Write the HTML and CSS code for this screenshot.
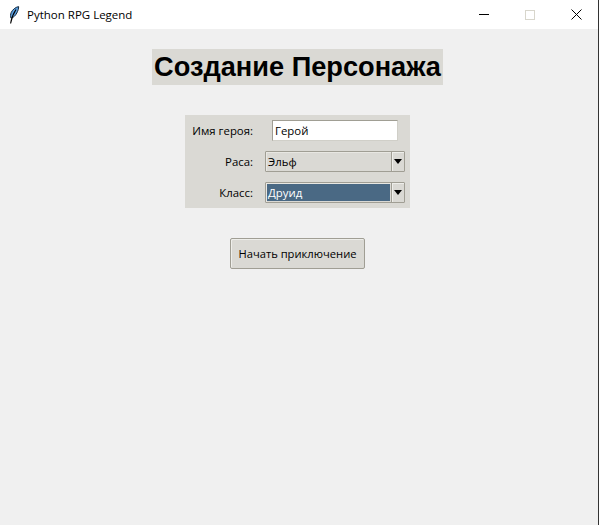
FILE: index.html
```html
<!DOCTYPE html>
<html lang="ru">
<head>
<meta charset="utf-8">
<title>Python RPG Legend</title>
<link rel="stylesheet" href="styles.css">
</head>
<body>
<div class="window">
  <header class="titlebar">
    <svg class="feather" width="12" height="18" viewBox="0 0 12 18">
      <path d="M10.6 .6 C7.5 1.2 4.5 3.6 3.2 6.5 C2.4 8.4 2.4 10.6 3 12.2 C5.4 11.6 7.5 9.6 8.8 7 C10 4.8 10.8 2.4 10.6 .6 Z" fill="#5a9fe0" stroke="#14283c" stroke-width="1"/>
      <path d="M8 3.5 C6 6.5 3.6 11 2.6 17.5" stroke="#000" stroke-width="1.1" fill="none"/>
    </svg>
    <span class="title-text">Python RPG Legend</span>
    <div class="controls">
      <span class="ctl"><svg width="10" height="10" viewBox="0 0 10 10"><path d="M0 4.5H10" stroke="#000" fill="none"/></svg></span>
      <span class="ctl"><svg width="10" height="10" viewBox="0 0 10 10"><rect x=".5" y=".5" width="9" height="9" stroke="#d8d6cc" fill="none"/></svg></span>
      <span class="ctl"><svg width="11" height="11" viewBox="0 0 11 11"><path d="M.5 .5L10.5 10.5M10.5 .5L.5 10.5" stroke="#000" fill="none"/></svg></span>
    </div>
  </header>
  <main class="content">
    <h1 class="heading">Создание Персонажа</h1>
    <section class="form">
      <label class="label">Имя героя:</label>
      <div class="entry-cell"><div class="entry">Герой</div></div>
      <label class="label">Раса:</label>
      <div class="combo">
        <div class="combo-value">Эльф</div>
        <div class="combo-arrow"><span class="tri"></span></div>
      </div>
      <label class="label">Класс:</label>
      <div class="combo">
        <div class="combo-value selected">Друид</div>
        <div class="combo-arrow"><span class="tri"></span></div>
      </div>
    </section>
    <button class="start" type="button">Начать приключение</button>
  </main>
</div>
</body>
</html>
```
FILE: styles.css
```css
* { box-sizing: border-box; }
html, body { margin: 0; height: 100%; }
body { font-family: "Open Sans", "Noto Sans", sans-serif; font-size: 11.4px; color: #000; background: #f0f0f0; overflow: hidden; }
.window { height: 525px; display: flex; flex-direction: column; border-right: 1px solid #333; }
.titlebar { height: 29px; flex: none; background: #fff; display: flex; align-items: center; padding-left: 8px; }
.feather { flex: none; }
.title-text { margin-left: 7px; font-size: 11.5px; }
.controls { margin-left: auto; display: flex; height: 100%; margin-right: -1px; }
.ctl { width: 46px; display: flex; align-items: center; justify-content: center; }
.content { flex: 1; display: flex; flex-direction: column; align-items: center; padding: 20px 3px 0 0; }
.heading { margin: 0; width: 291px; height: 36px; background: #dad9d4; font: bold 27.2px/36px "Liberation Sans", Arial, sans-serif; text-align: center; white-space: nowrap; }
.form { margin-top: 30px; width: 225px; height: 93px; background: #dad9d4; padding: 5px 5px 5px 0; display: grid; grid-template-columns: 68px 140px; column-gap: 12px; grid-template-rows: 21px 21px 21px; row-gap: 10px; align-items: center; }
.label { text-align: right; white-space: nowrap; }
.entry-cell { padding: 0 7px; }
.entry { height: 21px; background: #fff; border: 1px solid; border-color: #a09e94 #d0cfc8 #d0cfc8 #a09e94; padding-left: 2px; line-height: 19px; }
.combo { height: 21px; display: flex; border: 1px solid #a09e94; border-radius: 1px; background: #dad9d4; box-shadow: inset 1px 1px 0 #e8e7e2; }
.combo-value { flex: 1; margin: 1px 0 1px 1px; line-height: 17px; padding-left: 1px; }
.combo-value.selected { background: #4a6984; color: #fff; }
.combo-arrow { width: 13px; flex: none; border-left: 1px solid #a09e94; margin-left: 1px; display: flex; align-items: center; justify-content: center; background: #dad9d4; box-shadow: inset 1px 1px 0 #eeeeea; }
.tri { width: 0; height: 0; border: 4.5px solid transparent; border-top: 5px solid #000; border-bottom: 0; }
.start { margin-top: 30px; width: 135px; height: 31px; background: #dad9d4; border: 1px solid #a09e94; border-radius: 2px; padding: 0; font: inherit; font-size: 11.2px; color: #000; box-shadow: inset 1px 1px 0 #eeeeea; }
```
